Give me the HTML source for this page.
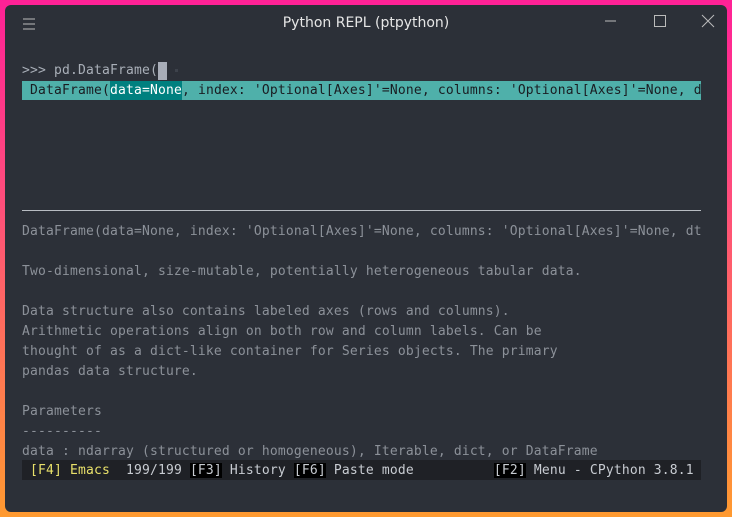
<!DOCTYPE html>
<html><head><style>
body{margin:0;width:732px;height:517px;overflow:hidden;background:linear-gradient(180deg,#ff2196 0%,#ff4f7a 40%,#ff9a30 100%);}
.win{position:absolute;left:5px;top:5px;width:722px;height:507px;background:#2c3038;border-radius:6px;}
.t{position:absolute;font-family:"DejaVu Sans Mono","Liberation Mono",monospace;font-size:13px;line-height:20px;white-space:pre;color:#8c9199;letter-spacing:0.17px;}
.title{position:absolute;left:0;width:732px;top:15px;text-align:center;font-family:"DejaVu Sans","Liberation Sans",sans-serif;font-size:14px;color:#e6e6e6;}
</style></head><body>
<div class="win"></div>
<div class="title">Python REPL (ptpython)</div>
<svg style="position:absolute;left:22px;top:17px" width="14" height="14"><path d="M1 2H13M1 7H13M1 12H13" stroke="#bbb" stroke-width="1"/></svg>
<svg style="position:absolute;left:605px;top:14px" width="110" height="16"><path d="M0 7H11" stroke="#bbb"/><path d="M49.5 1.5h11v11h-11z" fill="none" stroke="#bbb"/><path d="M97 1L109 13M109 1L97 13" stroke="#bbb"/></svg>
<div class="t" style="left:22px;top:61px;color:#a9afb8">&gt;&gt;&gt; pd.DataFrame(</div>
<div style="position:absolute;left:158px;top:62px;width:9px;height:18px;background:#a8adb8"></div>
<div style="position:absolute;left:175px;top:69px;width:3px;height:3px;background:#3d424b"></div>
<div style="position:absolute;left:22px;top:81px;width:679px;height:19px;background:#4fb0aa"></div>
<div style="position:absolute;left:110px;top:81px;width:72px;height:19px;background:#00807f"></div>
<div class="t" style="left:22px;top:81px;color:#1a1d22"> DataFrame(<span style="color:#fff">data=None</span>, index: 'Optional[Axes]'=None, columns: 'Optional[Axes]'=None, d</div>
<div style="position:absolute;left:22px;top:210px;width:679px;height:1px;background:#b8bcc2"></div>
<div class="t" style="left:22px;top:222px">DataFrame(data=None, index: 'Optional[Axes]'=None, columns: 'Optional[Axes]'=None, dt</div>
<div class="t" style="left:22px;top:262px">Two-dimensional, size-mutable, potentially heterogeneous tabular data.</div>
<div class="t" style="left:22px;top:302px">Data structure also contains labeled axes (rows and columns).
Arithmetic operations align on both row and column labels. Can be
thought of as a dict-like container for Series objects. The primary
pandas data structure.</div>
<div class="t" style="left:22px;top:402px">Parameters
----------
data : ndarray (structured or homogeneous), Iterable, dict, or DataFrame</div>
<div style="position:absolute;left:22px;top:460px;width:679px;height:20px;background:#1f2126"></div>
<div class="t" style="left:22px;top:461px;color:#c8ccd2"> <span style="color:#e8e06a">[F4] Emacs</span>  199/199 <span style="background:#000">[F3]</span> History <span style="background:#000">[F6]</span> Paste mode          <span style="background:#000">[F2]</span> Menu - CPython 3.8.1</div>
</body></html>
